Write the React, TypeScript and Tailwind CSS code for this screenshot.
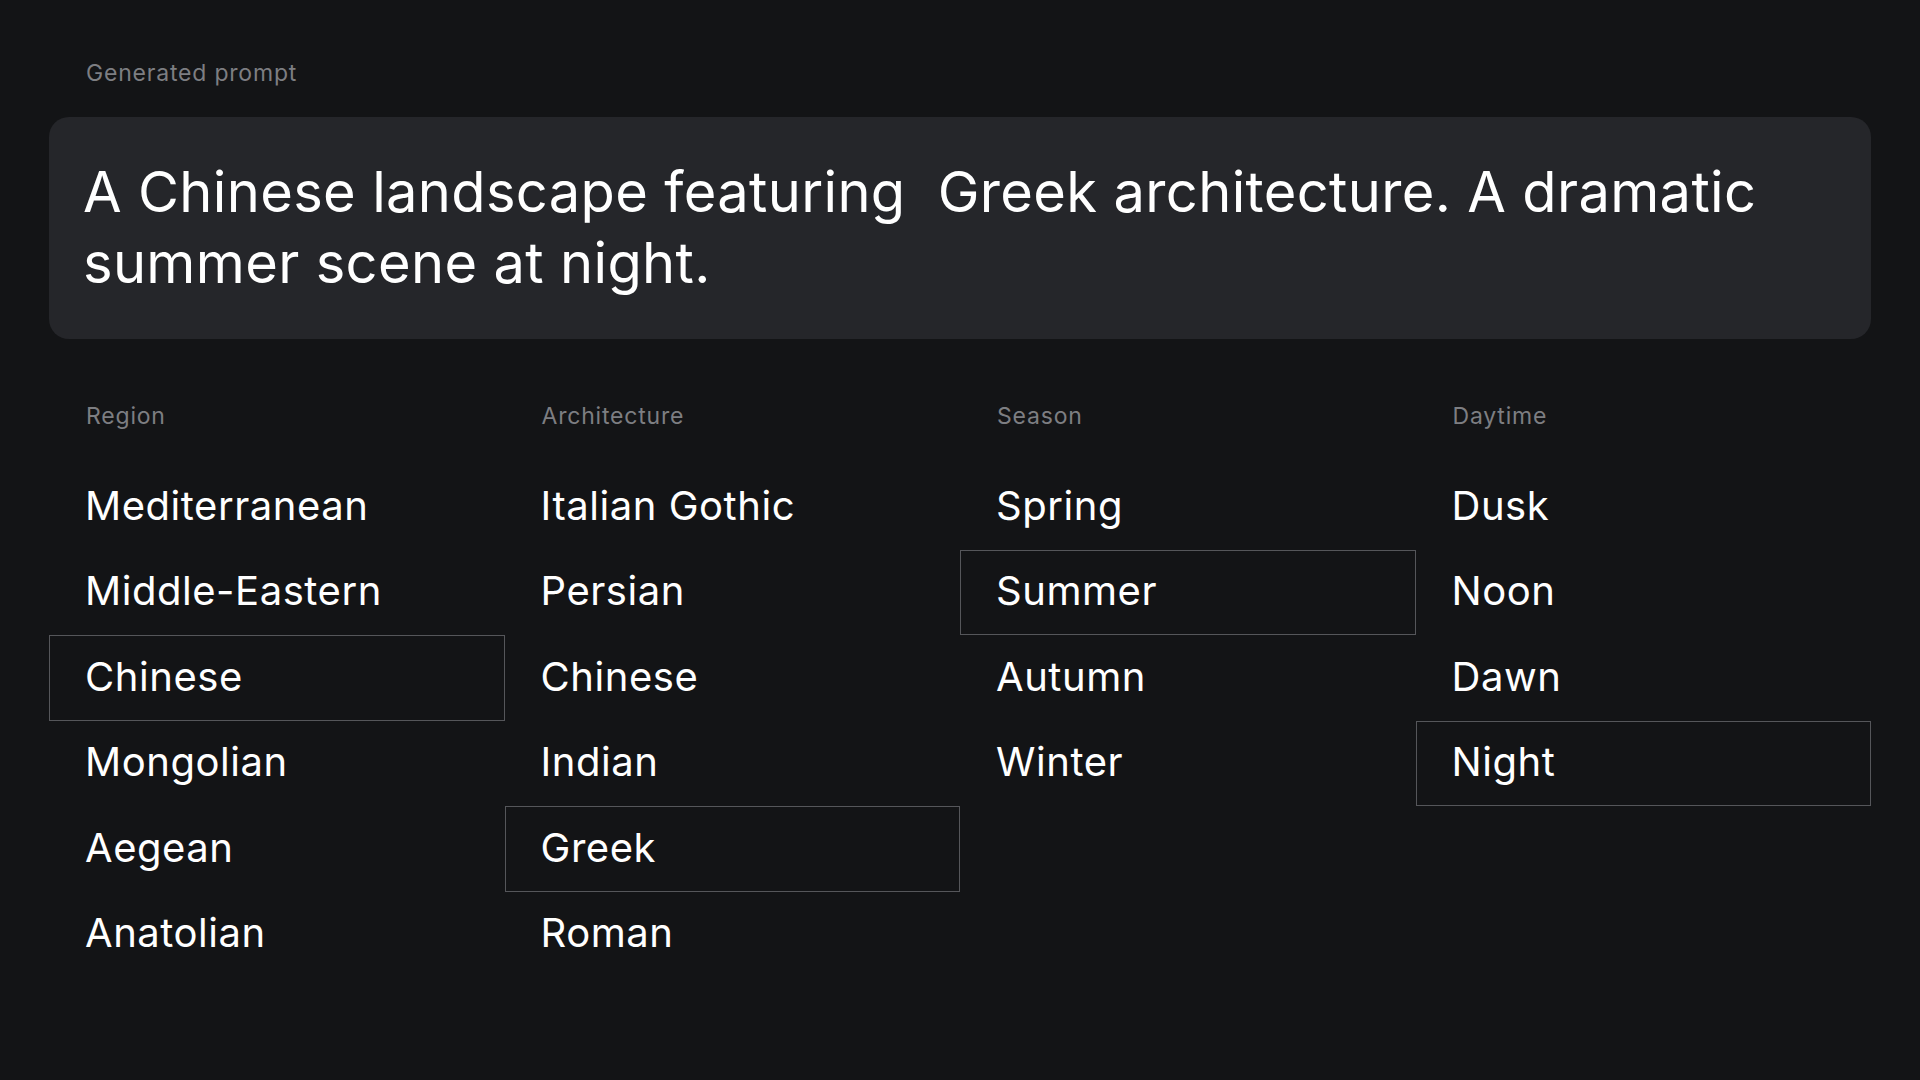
import React from "react";

const columns: { title: string; items: string[]; selected: string }[] = [
  {
    title: "Region",
    items: ["Mediterranean", "Middle-Eastern", "Chinese", "Mongolian", "Aegean", "Anatolian"],
    selected: "Chinese",
  },
  {
    title: "Architecture",
    items: ["Italian Gothic", "Persian", "Chinese", "Indian", "Greek", "Roman"],
    selected: "Greek",
  },
  {
    title: "Season",
    items: ["Spring", "Summer", "Autumn", "Winter"],
    selected: "Summer",
  },
  {
    title: "Daytime",
    items: ["Dusk", "Noon", "Dawn", "Night"],
    selected: "Night",
  },
];

export default function App() {
  return (
    <div
      className="min-h-screen w-full bg-[#131416] px-[49px] pt-[57px] pb-10 text-white"
      style={{ fontFamily: "Inter, 'Noto Sans', sans-serif" }}
    >
      <div className="pl-[37px] text-[23px] leading-[33px] tracking-[0.8px] text-[#7d7e82]">Generated prompt</div>
      <div className="mt-[27px] rounded-[20px] bg-[#25262a] pl-[34px] pr-[35px] py-[40px] text-[56px] leading-[71px] tracking-[0.35px] text-white">
        A Chinese landscape featuring&nbsp; Greek architecture. A dramatic summer scene at night.
      </div>
      <div className="mt-[61px] grid grid-cols-4">
        {columns.map((col) => (
          <div key={col.title} className="flex flex-col">
            <div className="pl-[37px] text-[23px] leading-[33px] tracking-[0.8px] text-[#7d7e82]">{col.title}</div>
            <div className="mt-[31px] flex flex-col">
              {col.items.map((item) => (
                <div
                  key={item}
                  className={
                    "flex h-[85.5px] items-center border pb-[2px] pl-[35px] text-[40px] tracking-[0.55px] text-white " +
                    (item === col.selected ? "border-[#55565a]" : "border-transparent")
                  }
                >
                  {item}
                </div>
              ))}
            </div>
          </div>
        ))}
      </div>
    </div>
  );
}
